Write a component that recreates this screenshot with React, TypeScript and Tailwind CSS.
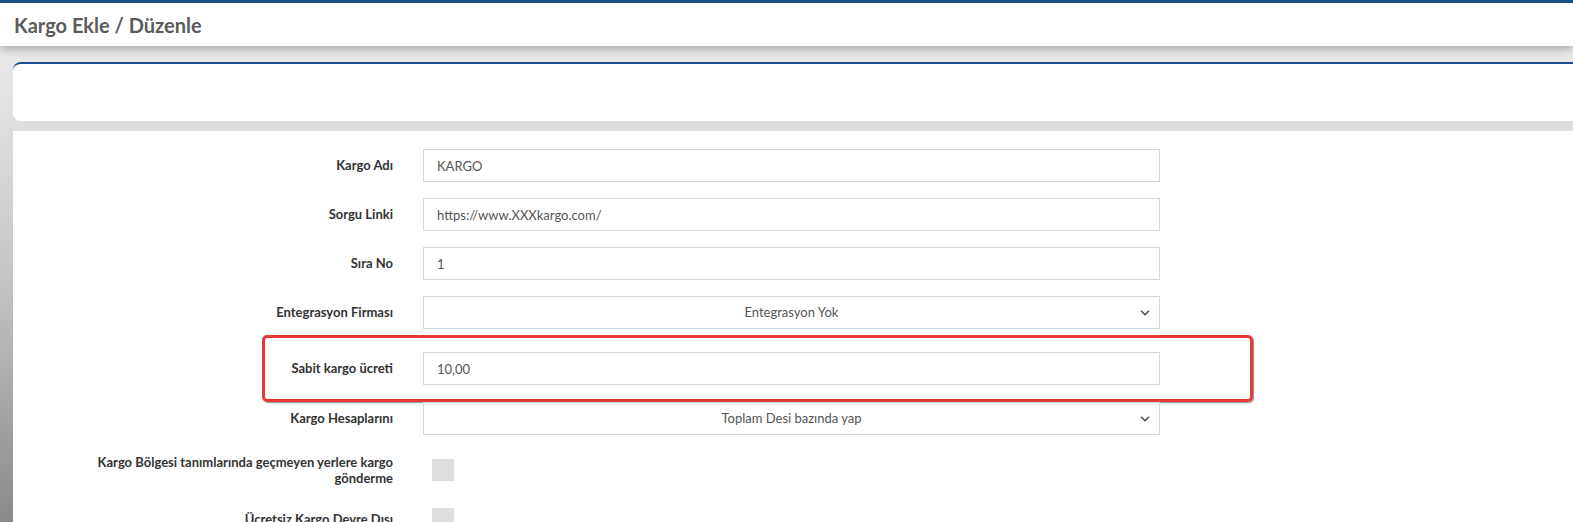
import { ChevronDown } from 'lucide-react';

const font = { fontFamily: 'Lato, "Noto Sans", sans-serif' };

const TextRow = ({ label, value }: { label: string; value: string }) => (
  <div className="flex items-center">
    <label className="w-[380px] shrink-0 text-right text-[13px] font-bold text-[#333]">{label}</label>
    <input
      type="text"
      defaultValue={value}
      className="ml-[30px] h-[33px] w-[737px] border border-[#d3d7de] bg-white px-[13px] text-[13px] text-[#555] outline-none"
    />
  </div>
);

const SelectRow = ({ label, value }: { label: string; value: string }) => (
  <div className="flex items-center">
    <label className="w-[380px] shrink-0 text-right text-[13px] font-bold text-[#333]">{label}</label>
    <div className="relative ml-[30px] w-[737px]">
      <select
        defaultValue={value}
        className="h-[33px] w-full appearance-none border border-[#d3d7de] bg-white px-[13px] text-center text-[13px] text-[#555] outline-none [text-align-last:center]"
      >
        <option>{value}</option>
      </select>
      <ChevronDown className="pointer-events-none absolute right-[8px] top-[10px] h-[14px] w-[14px] text-[#555]" strokeWidth={3} />
    </div>
  </div>
);

const CheckRow = ({ label }: { label: React.ReactNode }) => (
  <div className="flex items-center">
    <label className="w-[380px] shrink-0 text-right text-[13px] font-bold leading-[16px] text-[#333]">{label}</label>
    <span className="ml-[39px] block h-[22px] w-[22px] bg-[#dedede]" />
  </div>
);

export default function App() {
  return (
    <div className="h-[522px] w-[1573px] overflow-hidden" style={font}>
      <div className="h-[3px] bg-[#1d4e89]" />
      <div className="relative z-10 flex h-[43px] items-center bg-white pl-[14px] shadow-[0_4px_8px_rgba(0,0,0,0.25)]">
        <h1 className="text-[20px] font-bold text-[#5b5b5b]">Kargo Ekle / Düzenle</h1>
      </div>
      <div className="h-[476px] bg-gradient-to-b from-[#ebebeb] via-[#c4c4c4] to-[#8a8a8a] pl-[13px] pt-[16px]">
        <div className="h-[59px] rounded-l-lg border-t-2 border-[#1d4e89] bg-white" />
        <div className="mt-[10px] flex h-[400px] flex-col gap-[16px] bg-white pt-[18px]">
          <TextRow label="Kargo Adı" value="KARGO" />
          <TextRow label="Sorgu Linki" value="https://www.XXXkargo.com/" />
          <TextRow label="Sıra No" value="1" />
          <SelectRow label="Entegrasyon Firması" value="Entegrasyon Yok" />
          <div className="relative mt-[7px]">
            <TextRow label="Sabit kargo ücreti" value="10,00" />
            <div className="pointer-events-none absolute -top-[17px] -bottom-[17px] left-[249px] w-[991px] rounded-[5px] border-[3px] border-[#e53935] shadow-[1px_1px_1px_rgba(0,0,0,0.45)]" />
          </div>
          <div className="mt-[1px]">
            <SelectRow label="Kargo Hesaplarını" value="Toplam Desi bazında yap" />
          </div>
          <div className="mt-[3px] flex flex-col gap-[22px]">
            <CheckRow
              label={
                <>
                  Kargo Bölgesi tanımlarında geçmeyen yerlere kargo
                  <br />
                  gönderme
                </>
              }
            />
            <CheckRow label="Ücretsiz Kargo Devre Dışı" />
          </div>
        </div>
      </div>
    </div>
  );
}
